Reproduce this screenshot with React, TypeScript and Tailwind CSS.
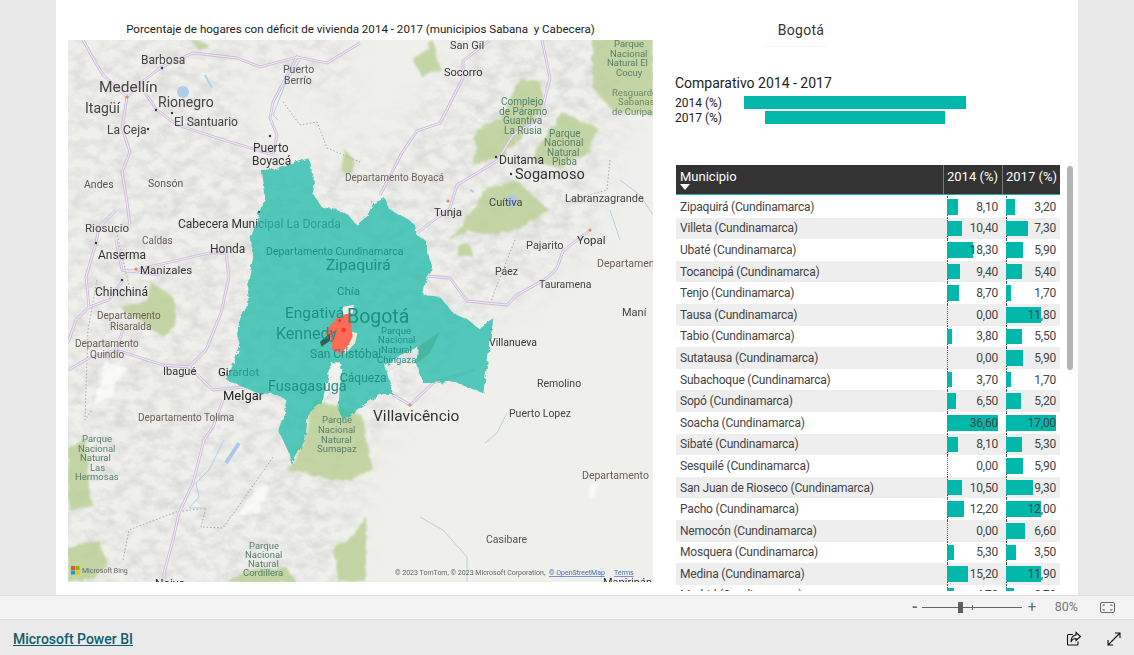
import React from 'react';

const rows = [
  { name: 'Zipaquirá', a: 8.1, b: 3.2 },
  { name: 'Villeta', a: 10.4, b: 7.3 },
  { name: 'Ubaté', a: 18.3, b: 5.9 },
  { name: 'Tocancipá', a: 9.4, b: 5.4 },
  { name: 'Tenjo', a: 8.7, b: 1.7 },
  { name: 'Tausa', a: 0, b: 11.8 },
  { name: 'Tabio', a: 3.8, b: 5.5 },
  { name: 'Sutatausa', a: 0, b: 5.9 },
  { name: 'Subachoque', a: 3.7, b: 1.7 },
  { name: 'Sopó', a: 6.5, b: 5.2 },
  { name: 'Soacha', a: 36.6, b: 17 },
  { name: 'Sibaté', a: 8.1, b: 5.3 },
  { name: 'Sesquilé', a: 0, b: 5.9 },
  { name: 'San Juan de Rioseco', a: 10.5, b: 9.3 },
  { name: 'Pacho', a: 12.2, b: 12 },
  { name: 'Nemocón', a: 0, b: 6.6 },
  { name: 'Mosquera', a: 5.3, b: 3.5 },
  { name: 'Medina', a: 15.2, b: 11.9 },
  { name: 'Madrid', a: 4.7, b: 2.7 },
];

const fmt = (n: number) => n.toFixed(2).replace('.', ',');

// text, x, baseline y, size, colour
const labels: [string, number, number, number, string][] = [
  ['San Gil', 450, 49, 11, '#444'],
  ['Socorro', 444, 76, 11, '#333'],
  ['Barbosa', 141, 64, 12, '#444'],
  ['Medellín', 99, 92, 15.5, '#444'],
  ['Puerto', 283, 73, 10.5, '#555'],
  ['Berrío', 284, 84, 10.5, '#555'],
  ['Rionegro', 158, 107, 14, '#444'],
  ['Itagüí', 85, 113, 14, '#444'],
  ['La Ceja', 107, 134, 12, '#444'],
  ['El Santuario', 174, 126, 12, '#444'],
  ['Puerto', 253, 152, 12, '#333'],
  ['Boyacá', 252, 165, 12, '#333'],
  ['Andes', 84, 188, 10.5, '#555'],
  ['Sonsón', 148, 187, 10.5, '#555'],
  ['Departamento Boyacá', 345, 181, 10, '#6b5f55'],
  ['Cabecera Municipal La Dorada', 178, 228, 12, '#333'],
  ['Honda', 210, 253, 12, '#333'],
  ['Riosucio', 85, 232, 11.5, '#444'],
  ['Caldas', 142, 244, 10, '#6b5f55'],
  ['Anserma', 98, 259, 12, '#333'],
  ['Manizales', 140, 274, 11.5, '#333'],
  ['Chinchiná', 95, 296, 12, '#333'],
  ['Departamento', 97, 319, 10, '#6b5f55'],
  ['Risaralda', 110, 330, 10, '#6b5f55'],
  ['Departamento', 75, 347, 10, '#6b5f55'],
  ['Quindío', 90, 358, 10, '#6b5f55'],
  ['Ibagué', 163, 375, 11, '#333'],
  ['Girardot', 218, 376, 11.5, '#111'],
  ['Melgar', 223, 400, 13, '#222'],
  ['Departamento Tolima', 138, 421, 10, '#6b5f55'],
  ['Parque', 82, 442, 9.5, '#55806a'],
  ['Nacional', 78, 452, 9.5, '#55806a'],
  ['Natural', 80, 461, 9.5, '#55806a'],
  ['Las', 90, 471, 9.5, '#55806a'],
  ['Hermosas', 75, 480, 9.5, '#55806a'],
  ['Parque', 322, 423, 9.5, '#55806a'],
  ['Nacional', 318, 433, 9.5, '#55806a'],
  ['Natural', 321, 443, 9.5, '#55806a'],
  ['Sumapaz', 317, 452, 9.5, '#55806a'],
  ['Villavicêncio', 373, 421, 15.5, '#333'],
  ['Puerto Lopez', 509, 417, 10.5, '#444'],
  ['Remolino', 537, 387, 10.5, '#444'],
  ['Villanueva', 489, 346, 10.5, '#333'],
  ['Maní', 622, 316, 11, '#444'],
  ['Duitama', 499, 164, 12, '#333'],
  ['Sogamoso', 515, 179, 14.5, '#333'],
  ['Labranzagrande', 565, 202, 11, '#444'],
  ['Cuítiva', 489, 206, 11, '#444'],
  ['Tunja', 434, 216, 11.5, '#333'],
  ['Pajarito', 526, 249, 11, '#444'],
  ['Yopal', 577, 244, 11.5, '#333'],
  ['Páez', 495, 275, 10.5, '#444'],
  ['Tauramena', 539, 288, 10.5, '#444'],
  ['Departamen', 597, 267, 10.5, '#6b5f55'],
  ['Departamento', 582, 479, 10.5, '#6b5f55'],
  ['Casibare', 486, 543, 10.5, '#555'],
  ['Neiva', 155, 588, 12, '#333'],
  ['Mapiripán', 603, 586, 11, '#333'],
  ['Complejo', 501, 105, 10, '#55806a'],
  ['de Páramo', 499, 115, 10, '#55806a'],
  ['Guantiva', 503, 124, 10, '#55806a'],
  ['La Rusia', 504, 134, 10, '#55806a'],
  ['Parque', 549, 137, 10, '#55806a'],
  ['Nacional', 544, 146, 10, '#55806a'],
  ['Natural', 547, 156, 10, '#55806a'],
  ['Pisba', 552, 165, 10, '#55806a'],
  ['Parque', 614, 47, 9.5, '#55806a'],
  ['Nacional', 610, 57, 9.5, '#55806a'],
  ['Natural El', 607, 66, 9.5, '#55806a'],
  ['Cocuy', 616, 76, 9.5, '#55806a'],
  ['Resguardo', 612, 96, 9.5, '#6b8a6a'],
  ['Sabanas', 618, 105, 9.5, '#6b8a6a'],
  ['de Curipao', 612, 115, 9.5, '#6b8a6a'],
  ['Parque', 249, 549, 9.5, '#55806a'],
  ['Nacional', 245, 558, 9.5, '#55806a'],
  ['Natural', 248, 567, 9.5, '#55806a'],
  ['Cordillera', 243, 576, 9.5, '#55806a'],
];

// names that sit on the coloured region, drawn on top of it
const regionLabels: [string, number, number, number][] = [
  ['Departamento Cundinamarca', 266, 255, 10.5],
  ['Zipaquirá', 326, 270, 15.5],
  ['Chía', 337, 295, 11.5],
  ['Engativá', 285, 318, 15.5],
  ['Kennedy', 276, 339, 16],
  ['Bogotá', 347, 323, 19.5],
  ['San Cristóbal', 310, 358, 12],
  ['Cáqueza', 340, 382, 12],
  ['Fusagasugá', 268, 391, 14.5],
  ['Parque', 381, 334, 9.5],
  ['Nacional', 378, 343, 9.5],
  ['Natural', 381, 353, 9.5],
  ['Chingaza', 377, 363, 9.5],
];

const roads = [
  'M160 68L193 53L237 58L260 67L297 57L327 63L360 43',
  'M127 97L142 82L160 68',
  'M127 97L122 128L130 152L122 172L127 202L130 225',
  'M145 93L157 110L177 125L230 142L247 147L273 155',
  'M298 55L273 102L270 118L277 135L273 155',
  'M83 40L93 58L103 75L127 97',
  'M116 210L99 227L96 243L86 277L89 307L76 320L68 343',
  'M116 240L122 270L160 275M126 272L179 260L209 253L226 253L229 277L221 313L206 350L189 367',
  'M123 280L109 300L89 307',
  'M68 370L89 358L116 350L163 365L189 367L213 390L243 387',
  'M123 330L116 350',
  'M223 400L213 427L204 440L193 483L179 513L173 540L164 573L164 582',
  'M417 233L450 208L457 185L497 161L513 135L540 118L550 78L542 40',
  'M380 195L403 151L417 131L440 123L463 78L463 61L490 40',
  'M427 276L450 278L467 301L507 305L517 295L547 278L557 268L563 251L590 230',
  'M393 395L410 405L433 383L475 370',
];

const greens = [
  '593,38 653,38 653,115 613,111 593,88',
  '413,61 433,41 440,68 423,78',
  '477,128 500,118 520,78 540,81 543,105 527,131 500,158 473,165',
  '537,148 563,113 597,128 590,151 560,168 533,161',
  '450,241 487,188 517,181 550,211 520,228 493,235 470,231',
  '457,245 470,243 472,256 458,256',
  '149,280 173,297 176,327 163,337 139,320 119,307 149,300',
  '68,450 86,437 89,487 92,505 68,510',
  '68,547 99,540 109,567 86,582 68,582',
  '223,582 253,570 286,567 296,582',
  '333,550 359,530 366,515 366,582 339,582',
  '313,400 340,407 363,417 372,470 345,482 287,470 303,443',
  '345,150 355,160 352,175 340,170',
  '192,40 210,45 200,52',
];

const MapVisual = () => (
  <svg viewBox="68 40 585 542" className="w-[585px] h-[542px] block font-['Roboto',sans-serif]">
    <defs>
      <filter id="hills" x="0" y="0" width="100%" height="100%">
        <feTurbulence type="fractalNoise" baseFrequency="0.07 0.1" numOctaves="5" seed="7" />
        <feColorMatrix values="0 0 0 0 0.58  0 0 0 0 0.58  0 0 0 0 0.57  1.15 0 0 0 -0.42" />
      </filter>
      <filter id="soft"><feGaussianBlur stdDeviation="16" /></filter>
      <filter id="rough" x="-5%" y="-5%" width="110%" height="110%">
        <feTurbulence type="fractalNoise" baseFrequency="0.09" numOctaves="3" seed="3" />
        <feDisplacementMap in="SourceGraphic" scale="7" />
        <feGaussianBlur stdDeviation="0.9" />
      </filter>
      <filter id="jag" x="-5%" y="-5%" width="110%" height="110%">
        <feTurbulence type="fractalNoise" baseFrequency="0.05" numOctaves="4" seed="5" />
        <feDisplacementMap in="SourceGraphic" scale="16" />
      </filter>
      <filter id="map-soft"><feGaussianBlur stdDeviation="0.35" /></filter>
      <mask id="relief">
        <polygon filter="url(#soft)" fill="#fff" points="60,30 345,30 350,170 400,130 480,30 660,30 600,180 590,240 520,300 470,340 420,400 366,450 345,600 60,600" />
        <polygon filter="url(#soft)" fill="#000" points="235,60 345,110 345,160 280,170 240,120" />
      </mask>
    </defs>
    <g filter="url(#map-soft)">
      <rect x="68" y="40" width="585" height="542" fill="#efefec" />
      <rect x="68" y="40" width="585" height="542" filter="url(#hills)" mask="url(#relief)" />
      <g filter="url(#rough)" fill="#bcd198" opacity="0.85">
        {greens.map((g) => <polygon key={g} points={g} />)}
      </g>
      <g filter="url(#rough)" fill="#fff" opacity="0.7">
        <polygon points="106,363 126,367 109,400 93,407" />
        <polygon points="590,486 600,480 595,497 588,496" />
        <polygon points="252,490 268,485 260,512 240,516" />
      </g>
      <g fill="none" stroke="#a8a8a4" strokeDasharray="1.5 2">
        <path d="M123 560L129 530L176 512L206 508L201 527L223 528L243 500L273 457" />
        <path d="M283 102L300 125L317 122L327 148L360 162" />
        <path d="M610 160L607 190L570 200M515 240L495 290L490 305" />
        <path d="M97 280L88 330L85 420L92 410M115 225L130 290" />
      </g>
      <g fill="none" stroke="#b3d0ea" strokeWidth="1">
        <path d="M224 440L209 470L196 483L199 497L189 508L206 508" />
        <path d="M507 413L497 433L485 443" />
        <path d="M420 517L443 530L467 557L467 582" />
        <path d="M300 60L285 85L273 115L278 120M620 180L640 195L653 215M610 210L620 240" />
      </g>
      <ellipse cx="512" cy="201" rx="5" ry="6" fill="#aac9e8" />
      <ellipse cx="183" cy="92" rx="6" ry="6" fill="#b0cdea" />
      <path d="M226 463L239 443" stroke="#aac9e8" strokeWidth="4" />
      <path d="M205 75L212 88M470 190L474 192" stroke="#b3d0ea" strokeWidth="2" />
      <g fill="none" stroke="#cdbcdc" strokeWidth="2.8" strokeLinejoin="round">
        {roads.map((r) => <path key={r} d={r} />)}
      </g>
      <g fill="none" stroke="#f0e9f4" strokeWidth="1.1" strokeLinejoin="round">
        {roads.map((r) => <path key={r} d={r} />)}
      </g>
      {labels.map(([t, x, y, s, c]) => (
        <text key={`${t}-${x}-${y}`} x={x} y={y} fontSize={s} fill={c}>{t}</text>
      ))}
      <g fill="#333">
        <circle cx="162" cy="68" r="1.2" /><circle cx="156" cy="110" r="1.2" /><circle cx="172" cy="113" r="1.2" />
        <circle cx="148" cy="129" r="1.2" /><circle cx="270" cy="136" r="1.2" /><circle cx="259" cy="212" r="1.2" />
        <circle cx="96" cy="243" r="1.2" /><circle cx="122" cy="280" r="1.2" /><circle cx="496" cy="157" r="1.2" />
        <circle cx="511" cy="174" r="1.2" />
      </g>
      <g fill="#ee8a4c">
        <circle cx="127" cy="97" r="1.6" /><circle cx="448" cy="201" r="1.6" /><circle cx="590" cy="230" r="1.6" />
        <circle cx="410" cy="405" r="1.6" /><circle cx="136" cy="269" r="1.6" />
      </g>
      <g transform="translate(220 150) scale(0.3333)">
        <polygon points="360,640 335,640 320,700 305,760 320,740 345,700" fill="#f2f1ec" />
        <polygon
          filter="url(#jag)"
          fill="#27bdac"
          fillOpacity="0.78"
          points="265,25 275,60 285,100 278,130 305,170 350,180 385,195 410,225 440,200 460,160 495,145 510,180 560,205 585,225 590,255 615,270 635,355 620,380 610,435 660,440 700,490 745,510 775,535 820,505 790,730 700,695 610,700 590,640 595,590 530,620 495,645 520,735 480,735 430,765 370,810 355,780 360,700 365,640 335,640 320,700 305,760 265,790 255,870 215,945 205,905 175,840 200,770 195,745 145,725 125,735 20,690 60,590 50,530 85,460 85,390 100,320 90,270 115,200 135,130 125,60 180,55"
        />
        <polygon points="660,545 630,610 590,640 595,590" fill="#3a9f80" opacity="0.4" />
        <polygon points="370,470 402,465 398,490 365,495" fill="#f4ece4" />
        <polygon points="395,545 412,550 405,580 375,612 370,590" fill="#ecebd8" />
        <polygon
          filter="url(#rough)"
          fill="#ff6b57"
          points="362,495 395,490 394,525 398,560 385,585 362,612 336,600 335,575 315,550 335,520 350,505"
        />
        <polygon points="300,575 330,550 330,572 305,590" fill="#2f5f5f" />
        <circle cx="371" cy="540" r="7" fill="#e8432e" />
        <circle cx="359" cy="512" r="4" fill="#c43b2a" />
        <circle cx="341" cy="547" r="3" fill="#c43b2a" />
      </g>
      {regionLabels.map(([t, x, y, s]) => (
        <text key={`${t}-${x}`} x={x} y={y} fontSize={s} fill="#1f8f84">{t}</text>
      ))}
      <rect x="71" y="566" width="4" height="4" fill="#f25022" />
      <rect x="75.5" y="566" width="4" height="4" fill="#7fba00" />
      <rect x="71" y="570.5" width="4" height="4" fill="#00a4ef" />
      <rect x="75.5" y="570.5" width="4" height="4" fill="#ffb900" />
      <text x="82" y="573" fontSize="7" fill="#666">Microsoft Bing</text>
      <text x="395" y="575" fontSize="7" fill="#666">© 2023 TomTom, © 2023 Microsoft Corporation, </text>
      <text x="549" y="575" fontSize="7" fill="#4a6fb5" textDecoration="underline">© OpenStreetMap</text>
      <text x="614" y="575" fontSize="7" fill="#4a6fb5" textDecoration="underline">Terms</text>
    </g>
  </svg>
);

const BarCell = ({ value, scale, width }: { value: number; scale: number; width: string }) => (
  <div className={`relative h-full pr-1 flex items-center justify-end ${width}`}>
    <div className="absolute left-0 top-0 bottom-0 border-l border-dotted border-[#555]" />
    <div className="absolute left-0 top-[3px] bottom-[3px] bg-[#01b8aa]" style={{ width: value * scale }} />
    <span className="relative">{fmt(value)}</span>
  </div>
);

const DataTable = () => (
  <div className="relative h-[426px] w-[398px] overflow-hidden">
    <div className="flex h-[30px] w-[384px] bg-[#333333] border-b border-[#1fb5a6] text-white text-[13px]">
      <div className="w-[267px] pl-1 pt-[2px] relative">
        Municipio
        <svg width="10" height="6" viewBox="0 0 10 6" className="absolute left-1 top-[19px]">
          <polygon points="0,0 10,0 5,6" fill="#fff" />
        </svg>
      </div>
      <div className="w-[59px] border-l border-[#777] pl-[3px] pt-[2px] whitespace-nowrap">2014 (%)</div>
      <div className="w-[58px] border-l border-[#777] pl-[3px] pt-[2px] whitespace-nowrap">2017 (%)</div>
    </div>
    <div className="w-[384px] pt-px text-[12px] tracking-[-0.2px] text-[#444]">
      {rows.map((r, i) => (
        <div key={r.name} className={`flex items-center h-[21.6px] ${i % 2 === 1 ? 'bg-[#eeeeee]' : 'bg-white'}`}>
          <div className="w-[271px] pl-1 whitespace-nowrap">{r.name} (Cundinamarca)</div>
          <BarCell value={r.a} scale={1.4} width="w-[55px] mr-[4px]" />
          <BarCell value={r.b} scale={2.95} width="w-[54px]" />
        </div>
      ))}
    </div>
    <div className="absolute right-[1px] top-[1px] w-[6px] h-[204px] rounded-full bg-[#b4b4b4]" />
  </div>
);

const StatusBar = () => (
  <div className="h-[23px] bg-[#f3f3f3] border-t border-[#dedede] border-b border-[#c8c8c8] flex items-center justify-end text-[#666] box-content">
    <div className="flex items-center">
      <span className="text-[15px] font-bold leading-none w-[9px]">-</span>
      <div className="relative w-[100px] h-px bg-[#666] ml-[1px]">
        <div className="absolute left-[36px] top-[-5px] w-[5px] h-[11px] bg-[#606060]" />
        <div className="absolute left-[50px] top-[-2px] w-px h-[5px] bg-[#666]" />
      </div>
      <span className="text-[15px] leading-none ml-[6px] w-[10px] text-[#5b6d80]">+</span>
      <span className="text-[12.5px] ml-[17px] text-[#777]">80%</span>
      <svg width="15" height="11" viewBox="0 0 15 11" className="ml-[22px] mr-[19px]" fill="none" stroke="#666">
        <rect x="0.5" y="0.5" width="14" height="10" rx="1.5" />
        <path d="M3 4V3H5M10 3H12V4M12 7V8H10M5 8H3V7" />
      </svg>
    </div>
  </div>
);

const Footer = () => (
  <div className="flex-1 bg-[#eaeaea] flex items-center pl-[13px] pr-[12px] pt-[3px]">
    <span className="text-[14px] font-medium text-[#0e5f6b] underline">Microsoft Power BI</span>
    <svg width="16" height="16" viewBox="0 0 16 16" className="ml-auto" fill="none" stroke="#111" strokeWidth="1.1">
      <path d="M7 3.5H2.5A1 1 0 0 0 1.5 4.5V13A1 1 0 0 0 2.5 14H11A1 1 0 0 0 12 13V10.5" />
      <path d="M10 1.5L14.5 5.5L10 9.5V7.5C7.5 7.5 6 8.5 5 11C5 7.5 7 4.5 10 4Z" />
    </svg>
    <svg width="14" height="14" viewBox="0 0 14 14" className="ml-[25px] mr-[1px]" fill="none" stroke="#111" strokeWidth="1.1">
      <path d="M1 13L13 1M8 1H13V6M1 8V13H6" />
    </svg>
  </div>
);

export default function App() {
  return (
    <div className="h-[655px] w-[1134px] flex flex-col overflow-hidden font-['Roboto',sans-serif] bg-[#e9e9e9]">
      <div className="h-[595px] flex shrink-0 px-[56px]">
        <div className="w-[1022px] h-full bg-white flex">
          <div className="w-[619px] pl-3 shrink-0">
            <div className="h-[40px] w-[585px] pt-[20px] text-center text-[11.6px] leading-[18px] text-[#222] whitespace-pre">
              Porcentaje de hogares con déficit de vivienda 2014 - 2017 (municipios Sabana  y Cabecera)
            </div>
            <MapVisual />
          </div>
          <div className="flex-1 flex flex-col">
            <div className="w-[252px] h-[47px] pt-[20px] text-center text-[14px] tracking-[0.3px] leading-[20px] text-[#333] relative">
              Bogotá
              <div className="absolute left-[90px] w-[62px] top-[46px] border-t border-dotted border-[#ececec]" />
            </div>
            <div className="h-[118px] pt-[26px]">
              <div className="text-[14px] leading-[20px] text-[#222]">Comparativo 2014 - 2017</div>
              <div className="mt-[3px] flex flex-col gap-[2px] text-[12px] text-[#222]">
                <div className="flex items-center h-[13px]">
                  <span className="w-[69px]">2014 (%)</span>
                  <div className="h-[13px] w-[222px] bg-[#01b8aa]" />
                </div>
                <div className="flex items-center h-[13px]">
                  <span className="w-[90px]">2017 (%)</span>
                  <div className="h-[13px] w-[180px] bg-[#01b8aa]" />
                </div>
              </div>
            </div>
            <div className="pl-px"><DataTable /></div>
          </div>
        </div>
      </div>
      <StatusBar />
      <Footer />
    </div>
  );
}
